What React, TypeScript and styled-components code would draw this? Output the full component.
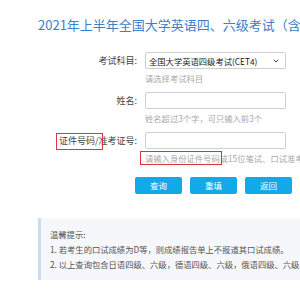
import React from "react";
import styled, { createGlobalStyle } from "styled-components";

const GlobalStyle = createGlobalStyle`
  html, body {
    margin: 0;
    padding: 0;
    background: #fff;
    overflow: hidden;
  }
  body {
    font-family: "Noto Sans CJK SC", "Noto Sans", sans-serif;
    color: #333;
  }
`;

const Page = styled.div`
  width: 420px;
  padding-top: 15px;
`;

const Title = styled.h1`
  margin: 0 0 0 38px;
  font-size: 13px;
  font-weight: 400;
  line-height: 20px;
  color: #3b80c8;
  white-space: nowrap;
`;

const Form = styled.div`
  display: grid;
  grid-template-columns: 137px 141px;
  column-gap: 8px;
  row-gap: 8px;
  margin-top: 17px;
`;

const Label = styled.div`
  grid-column: 1;
  text-align: right;
  font-size: 9px;
  line-height: 17px;
  color: #444;
  white-space: nowrap;
`;

const Field = styled.div`
  grid-column: 2;
  display: flex;
  flex-direction: column;
`;

const Input = styled.div`
  box-sizing: border-box;
  height: 17px;
  border: 1px solid #cfcfcf;
  border-radius: 2px;
  background: #fff;
`;

const Select = styled(Input)`
  display: flex;
  align-items: center;
  justify-content: space-between;
  padding: 0 6px 0 3px;
  font-size: 8.3px;
  color: #222;
  white-space: nowrap;
`;

const Help = styled.div`
  margin-top: 3px;
  font-size: 8.3px;
  line-height: 12px;
  color: #a9a9a9;
  white-space: nowrap;
`;

const Marked = styled.span<{ $l: number; $r: number; $t: number; $b: number }>`
  position: relative;
  &::after {
    content: "";
    position: absolute;
    left: ${(p) => p.$l}px;
    right: ${(p) => p.$r}px;
    top: ${(p) => p.$t}px;
    bottom: ${(p) => p.$b}px;
    border: 1.5px solid #e0343c;
  }
`;

const Buttons = styled.div`
  display: flex;
  gap: 8px;
  margin: 13px 0 0 135px;
`;

const Button = styled.button`
  width: 47px;
  height: 17px;
  padding: 0;
  border: none;
  border-radius: 2px;
  background: #12a9e8;
  color: #fff;
  font-family: inherit;
  font-size: 8.5px;
  line-height: 17px;
`;

const Notice = styled.div`
  margin: 24px 0 0 38px;
  padding: 9px 0 8px 9px;
  border-left: 3px solid #cbdcec;
  background: #f5f7fa;
  font-size: 8.3px;
  line-height: 15px;
  color: #555;
  white-space: nowrap;
`;

const Chevron = () => (
  <svg width="6" height="4" viewBox="0 0 6 4">
    <path d="M0.8 0.8 L3 3 L5.2 0.8" fill="none" stroke="#444" strokeWidth="1" />
  </svg>
);

export default function App() {
  return (
    <Page>
      <GlobalStyle />
      <Title>2021年上半年全国大学英语四、六级考试（含口试）成绩查询</Title>
      <Form>
        <Label>考试科目:</Label>
        <Field>
          <Select>
            <span>全国大学英语四级考试(CET4)</span>
            <Chevron />
          </Select>
          <Help>请选择考试科目</Help>
        </Field>

        <Label>姓名:</Label>
        <Field>
          <Input />
          <Help>姓名超过3个字，可只输入前3个</Help>
        </Field>

        <Label>
          <Marked $l={-3} $r={-8} $t={-1} $b={-3}>证件号码</Marked>/准考证号:
        </Label>
        <Field>
          <Input />
          <Help>
            <Marked $l={-5} $r={-2} $t={-1} $b={-1}>请输入身份证件号码</Marked>或15位笔试、口试准考证号
          </Help>
        </Field>
      </Form>
      <Buttons>
        <Button>查询</Button>
        <Button>重填</Button>
        <Button>返回</Button>
      </Buttons>
      <Notice>
        <div>温馨提示:</div>
        <div>1. 若考生的口试成绩为D等，则成绩报告单上不报道其口试成绩。</div>
        <div>2. 以上查询包含日语四级、六级，德语四级、六级，俄语四级、六级和法语四级成绩。</div>
      </Notice>
    </Page>
  );
}
